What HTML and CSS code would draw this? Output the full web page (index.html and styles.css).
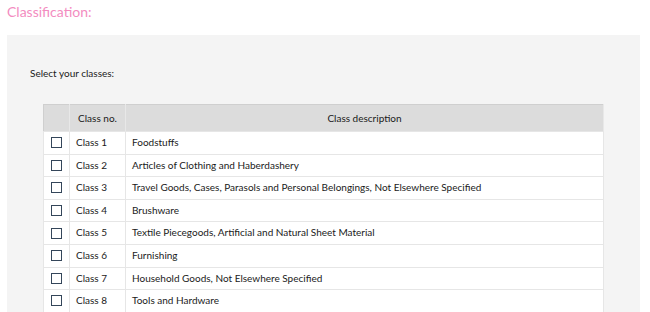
FILE: index.html
```html
<!DOCTYPE html>
<html lang="en">
<head>
  <meta charset="UTF-8">
  <meta name="viewport" content="width=device-width, initial-scale=1.0">
  <title>Classification</title>
  <link rel="stylesheet" href="styles.css">
</head>
<body>
  <h2 class="titulo">Classification:</h2>

  <section class="panel">
    <p class="intro">Select your classes:</p>
    <table class="clases">
      <thead>
        <tr><th class="col-check"></th><th class="col-num">Class no.</th><th>Class description</th></tr>
      </thead>
      <tbody>
        <tr><td><input type="checkbox"></td><td>Class 1</td><td>Foodstuffs</td></tr>
        <tr><td><input type="checkbox"></td><td>Class 2</td><td>Articles of Clothing and Haberdashery</td></tr>
        <tr><td><input type="checkbox"></td><td>Class 3</td><td>Travel Goods, Cases, Parasols and Personal Belongings, Not Elsewhere Specified</td></tr>
        <tr><td><input type="checkbox"></td><td>Class 4</td><td>Brushware</td></tr>
        <tr><td><input type="checkbox"></td><td>Class 5</td><td>Textile Piecegoods, Artificial and Natural Sheet Material</td></tr>
        <tr><td><input type="checkbox"></td><td>Class 6</td><td>Furnishing</td></tr>
        <tr><td><input type="checkbox"></td><td>Class 7</td><td>Household Goods, Not Elsewhere Specified</td></tr>
        <tr><td><input type="checkbox"></td><td>Class 8</td><td>Tools and Hardware</td></tr>
      </tbody>
    </table>
  </section>
</body>
</html>
```

FILE: styles.css
```css
body {
  font-family: Lato, "Open Sans", sans-serif;
  margin: 0;
  padding: 0;
  color: #1a1a1a;
  background-color: #ffffff;
}
.titulo {
  margin: 0;
  padding: 3px 7px 0;
  font-size: 14px;
  line-height: 17px;
  font-weight: normal;
  color: #f38cbf;
  height: 32px;
}
.panel {
  background-color: #f4f4f4;
  margin: 0 10px 0 7px;
  padding: 32px 36px 20px;
}
.intro {
  margin: 0 0 24px -13px;
  font-size: 10px;
  line-height: 13px;
}
.clases {
  width: 100%;
  border-collapse: collapse;
  background-color: #ffffff;
  border: 1px solid #cfcfcf;
  font-size: 10px;
}
.clases th {
  background-color: #dcdcdc;
  font-weight: normal;
  text-align: center;
  height: 26px;
  padding: 0 6px;
  border-right: 1px solid #e8e8e8;
  border-bottom: 1px solid #e6e6e6;
}
.clases td {
  padding: 4px 6px;
  line-height: 13.6px;
  border: 1px solid #e6e6e6;
  text-align: left;
}
.clases .col-check {
  width: 13px;
}
.clases .col-num {
  width: 43px;
}
.clases input[type="checkbox"] {
  appearance: none;
  display: block;
  width: 11px;
  height: 11px;
  margin: 0 0 0 1px;
  border: 1.5px solid #34465a;
  background: #fff;
  box-sizing: border-box;
}
```
